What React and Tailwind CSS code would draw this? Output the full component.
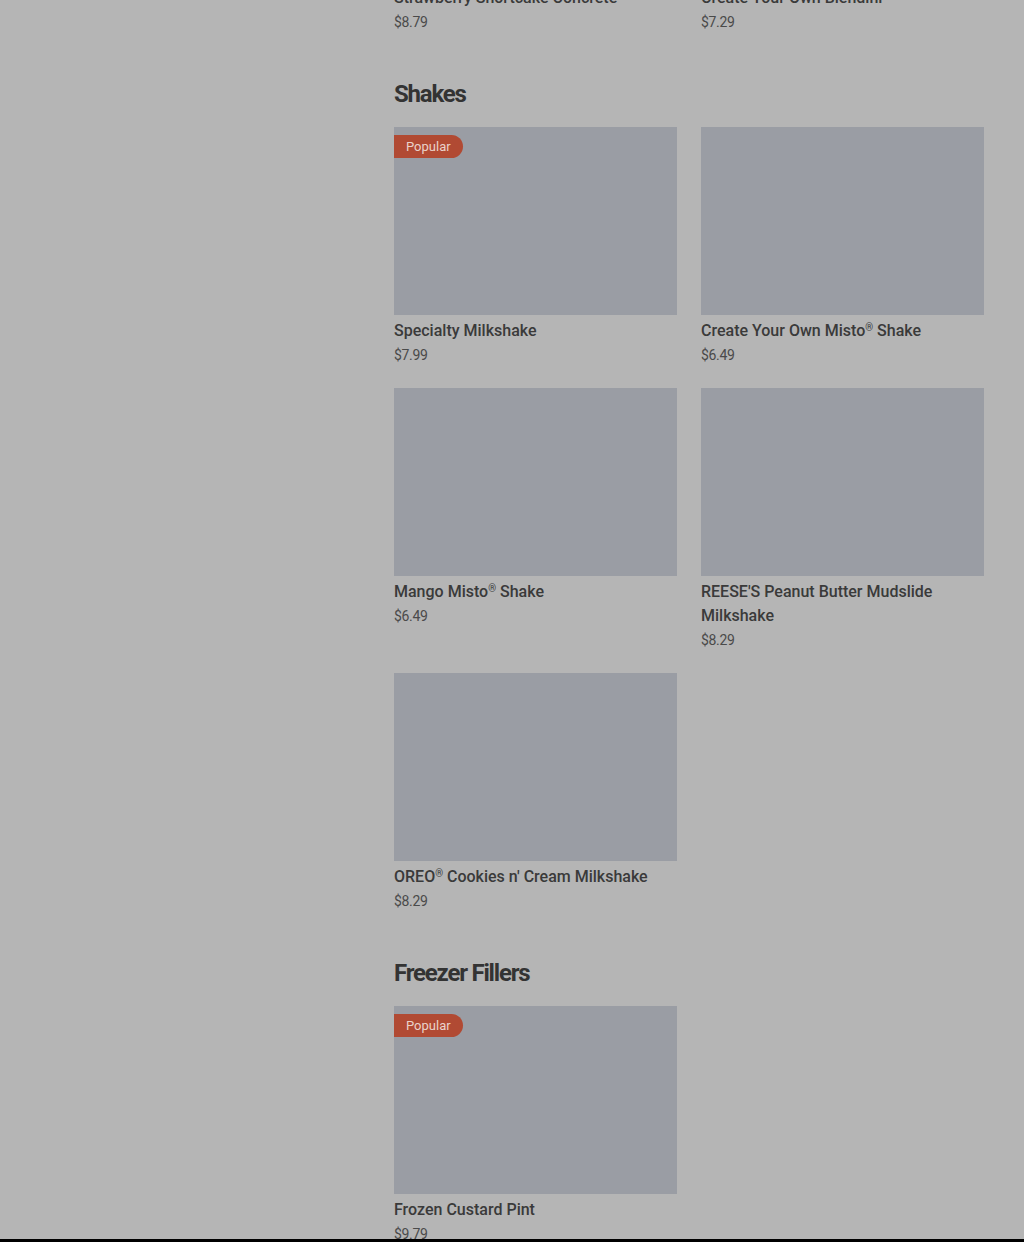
import React from 'react';

const sections = [
  {
    title: 'Shakes',
    items: [
      { name: 'Specialty Milkshake', price: '$7.99', popular: true },
      { name: 'Create Your Own Misto® Shake', price: '$6.49' },
      { name: 'Mango Misto® Shake', price: '$6.49' },
      { name: "REESE'S Peanut Butter Mudslide Milkshake", price: '$8.29' },
      { name: "OREO® Cookies n' Cream Milkshake", price: '$8.29' },
    ],
  },
  {
    title: 'Freezer Fillers',
    items: [{ name: 'Frozen Custard Pint', price: '$9.79', popular: true }],
  },
];

// small raised ® like the reference
const Name = ({ text }) => {
  const parts = text.split('®');
  return parts.map((p, i) => (
    <React.Fragment key={i}>
      {p}
      {i < parts.length - 1 && <span className="relative -top-[5px] text-[10px] leading-none">®</span>}
    </React.Fragment>
  ));
};

const ItemCard = ({ item }) => (
  <div>
    <div className="relative h-[188px] bg-[#9a9da4]">
      {item.popular && (
        <span className="absolute left-0 top-2 h-[23px] pl-3 pr-3 rounded-r-full bg-[#b14a33] text-[13px] leading-[23px] text-[#ead2ca]">
          Popular
        </span>
      )}
    </div>
    <p className="mt-1 text-base leading-6 font-medium text-[#3a3a3a]">
      <Name text={item.name} />
    </p>
    <p className="text-sm leading-6 tracking-tight text-[#4a4a4a]">{item.price}</p>
  </div>
);

export default function App() {
  return (
    <div className="min-h-screen bg-[#b5b5b5] overflow-hidden" style={{ fontFamily: 'Roboto, "Liberation Sans", sans-serif' }}>
      <div className="ml-[394px] w-[590px]">
        <div className="-mt-[14px] grid grid-cols-2 gap-x-6">
          <div>
            <p className="text-base leading-6 font-medium text-[#3a3a3a]">Strawberry Shortcake Concrete</p>
            <p className="text-sm leading-6 tracking-tight text-[#4a4a4a]">$8.79</p>
          </div>
          <div>
            <p className="text-base leading-6 font-medium text-[#3a3a3a]">Create Your Own Blendini™</p>
            <p className="text-sm leading-6 tracking-tight text-[#4a4a4a]">$7.29</p>
          </div>
        </div>
        {sections.map((section) => (
          <section key={section.title} className="pt-[44px]">
            <h2 className="mb-[17px] text-2xl leading-8 font-bold tracking-[-0.05em] text-[#333333]">{section.title}</h2>
            <div className="grid grid-cols-2 gap-x-6 gap-y-[21px]">
              {section.items.map((item) => (
                <ItemCard key={item.name} item={item} />
              ))}
            </div>
          </section>
        ))}
      </div>
      <div className="fixed bottom-0 left-0 right-0 h-[3px] bg-black" />
    </div>
  );
}
